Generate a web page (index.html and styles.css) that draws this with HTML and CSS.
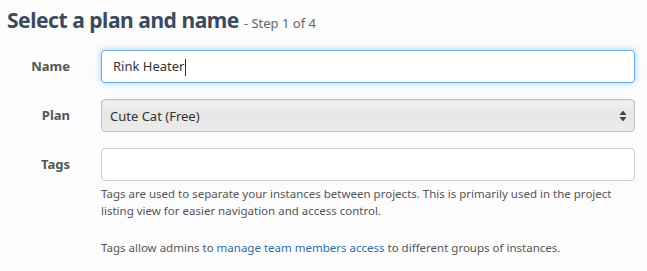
FILE: index.html
```html
<!DOCTYPE html>
<html lang="en">
<head>
    <meta charset="UTF-8">
    <title>New instance</title>
    <link rel="stylesheet" href="styles.css">
</head>
<body>
<div id="wizard">
    <h1>Select a plan and name <small>- Step 1 of 4</small></h1>
    <div class="row">
        <label class="label" for="name">Name</label>
        <div class="control">
            <div class="input focused" id="name">Rink Heater<span class="caret"></span></div>
        </div>
    </div>
    <div class="row">
        <label class="label" for="plan">Plan</label>
        <div class="control select-wrap">
            <select id="plan">
                <option selected>Cute Cat (Free)</option>
            </select>
            <svg class="arrows" width="8" height="12" viewBox="0 0 8 12">
                <path d="M4 0.5 L7.5 5 L0.5 5 Z" fill="#444"/>
                <path d="M4 11.5 L7.5 7 L0.5 7 Z" fill="#444"/>
            </svg>
        </div>
    </div>
    <div class="row">
        <label class="label" for="tags">Tags</label>
        <div class="control">
            <input class="input" id="tags" type="text">
            <p class="help">Tags are used to separate your instances between projects. This is primarily used in the project listing view for easier navigation and access control.</p>
            <p class="help">Tags allow admins to <a href="#">manage team members access</a> to different groups of instances.</p>
        </div>
    </div>
</div>
</body>
</html>
```
FILE: styles.css
```css
body{
    margin: 0;
    background: #fcfcfc;
    font-family: "Noto Sans", "Open Sans", sans-serif;
    color: #555;
}
#wizard{
    padding: 7px 12px 0 7px;
}
h1{
    margin: 0 0 14px 0;
    font-size: 21px;
    line-height: 26px;
    font-weight: bold;
    color: #3b4b5b;
    letter-spacing: -0.45px;
}
h1 small{
    font-size: 13px;
    font-weight: normal;
    color: #666;
    letter-spacing: 0;
}
.row{
    display: flex;
    margin-bottom: 16px;
}
.label{
    width: 63px;
    flex: none;
    text-align: right;
    font-size: 13px;
    font-weight: bold;
    line-height: 33px;
    color: #555;
    margin-right: 31px;
}
.control{
    flex: 1;
    position: relative;
}
.input{
    display: block;
    box-sizing: border-box;
    width: 100%;
    height: 33px;
    padding: 0 11px;
    border: 1px solid #ccc;
    border-radius: 4px;
    background: #fff;
    font-family: inherit;
    font-size: 13px;
    line-height: 31px;
    color: #333;
    outline: 0;
}
.input.focused{
    border-color: #66afe9;
    box-shadow: 0 0 6px rgba(102,175,233,.6);
}
.caret{
    display: inline-block;
    width: 1px;
    height: 17px;
    background: #333;
    vertical-align: middle;
    margin-left: 1px;
}
select{
    display: block;
    box-sizing: border-box;
    width: 100%;
    height: 33px;
    padding: 0 8px;
    border: 1px solid #c4c4c4;
    border-radius: 4px;
    background: linear-gradient(#f2f2f2, #e6e6e6 40%, #ececec);
    box-shadow: inset 0 1px 1px rgba(0,0,0,.08);
    font-family: inherit;
    font-size: 13px;
    color: #333;
    -webkit-appearance: none;
    appearance: none;
    outline: 0;
}
.arrows{
    position: absolute;
    right: 8px;
    top: 11px;
}
.help{
    margin: 5px 0 0 0;
    font-size: 11.5px;
    line-height: 16.5px;
    color: #555;
}
.help + .help{
    margin-top: 21px;
}
.help a{
    color: #2a6db0;
    text-decoration: none;
}
```
